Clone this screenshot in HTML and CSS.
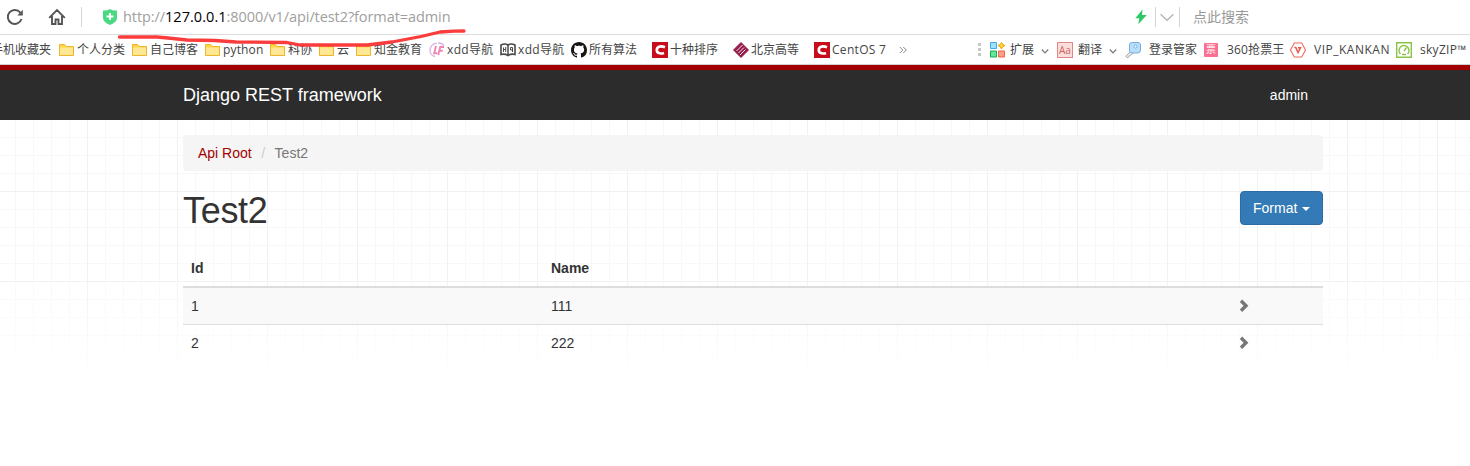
FILE: index.html
```html
<!DOCTYPE html>
<html lang="zh">
<head>
<meta charset="utf-8">
<title>Test2 – Django REST framework</title>
<link rel="stylesheet" href="styles.css">
</head>
<body>
<svg class="defs" width="0" height="0">
  <symbol id="folder" viewBox="0 0 16 16"><path d="M.5 2.500h5l2 2h7v9H.5z" fill="#ffd54a" stroke="#eeb52a"/><path d="M1 5.500h13v7.500H1z" fill="#ffe793"/></symbol>
  <symbol id="centos" viewBox="0 0 16 16"><path d="M0 0h16v16H0z" fill="#c70d1c"/><path d="M13 5.200C8 3.300 4.800 5 4.800 8s3.200 4.300 7.200 2.900" fill="none" stroke="#fff" stroke-width="2.700"/></symbol>
  <symbol id="down" viewBox="0 0 8 8"><path d="M.8 2.500 4 5.800 7.200 2.500" fill="none" stroke="#777" stroke-width="1.200"/></symbol>
  <symbol id="right" viewBox="0 0 10 14"><path d="M2 1.800 7 6.800l-5 5" fill="none" stroke="#777" stroke-width="3.400"/></symbol>
</svg>
<div class="address">
  <svg class="reload" width="18" height="18" viewBox="0 0 18 18"><path d="M15.500 11A7 7 0 1 1 14.300 4.600" fill="none" stroke="#555" stroke-width="1.900"/><path d="M16.800 1.800v5.700h-5.500z" fill="#555"/></svg>
  <svg class="home" width="18" height="18" viewBox="0 0 18 18"><path d="M1.200 9.800 9 2l7.800 7.800M4 8v8h3.500v-4.500h3V16H14V8" fill="none" stroke="#555" stroke-width="1.900"/></svg>
  <i class="rule rule-left"></i>
  <svg class="shield" width="14" height="16" viewBox="0 0 14 16"><path d="M0 1.500Q4 2 7 0q3 2 7 1.500V9q0 4-7 7-7-3-7-7z" fill="#4bd883"/><path d="M7 4v7M3.500 7.500h7" stroke="#fff" stroke-width="2"/></svg>
  <span class="url">http://<b>127.0.0.1</b>:8000/v1/api/test2?format=admin</span>
  <svg class="bolt" width="12" height="16" viewBox="0 0 12 16"><path d="M7.500.5.3 9.300h4L3.300 15.300 11.800 6H7z" fill="#2fc867"/></svg>
  <i class="rule"></i>
  <svg class="drop" width="14" height="9" viewBox="0 0 14 9"><path d="m.6 1.200 6.400 6 6.400-6" fill="none" stroke="#b5b5b5" stroke-width="1.400"/></svg>
  <i class="rule"></i>
  <span class="search">点此搜索</span>
</div>
<div class="bookmarks">
  <span class="mark w-first"><em>手机收藏夹</em></span>
  <span class="mark w73"><svg><use href="#folder"/></svg><em>个人分类</em></span>
  <span class="mark w73"><svg><use href="#folder"/></svg><em>自己博客</em></span>
  <span class="mark w65"><svg><use href="#folder"/></svg><em class="py">python</em></span>
  <span class="mark w49"><svg><use href="#folder"/></svg><em>科协</em></span>
  <span class="mark w37"><svg><use href="#folder"/></svg><em>云</em></span>
  <span class="mark w73"><svg><use href="#folder"/></svg><em>知金教育</em></span>
  <span class="mark w71"><svg viewBox="0 0 16 16"><path d="M8 1.500C3.500 1 .8 5 1 9c.3 3 2.500 5 5 5.500M9 1c3 0 5 1 6 3" fill="none" stroke="#d9b3df" stroke-width="1.300"/><path d="M7 4 5.200 11.300h3M9.200 13l2-8H15M10.300 8.700h3.500" fill="none" stroke="#ec86b5" stroke-width="1.900"/></svg><em class="xdd">xdd导航</em></span>
  <span class="mark w71"><svg viewBox="0 0 16 16"><path d="M1 3q4-2 7 0 3-2 7 0v9.500q-4-1-7 1-3-2-7-1z" fill="#fff" stroke="#4a4a4a" stroke-width="1.600"/><path d="M8 3v10" stroke="#4a4a4a" stroke-width="1.500"/><path d="M3.500 5.500v4.500M5.700 5v5M3.500 7.500h2M12.500 10V5.500h-2v2.500h2" fill="none" stroke="#4a4a4a"/></svg><em class="xdd">xdd导航</em></span>
  <span class="mark w81"><svg viewBox="0 0 16 16"><path fill="#171515" d="M8 0C3.580 0 0 3.580 0 8c0 3.540 2.290 6.530 5.470 7.590.4.070.55-.17.55-.38 0-.19-.01-.82-.01-1.490-2.010.37-2.530-.49-2.690-.94-.09-.23-.48-.94-.82-1.130-.28-.15-.68-.52-.01-.53.63-.01 1.080.58 1.230.82.72 1.210 1.870.87 2.330.66.07-.52.28-.87.51-1.070-1.780-.2-3.640-.89-3.640-3.950 0-.87.31-1.590.82-2.150-.08-.2-.36-1.020.08-2.120 0 0 .67-.21 2.200.82.64-.18 1.320-.27 2-.27s1.360.09 2 .27c1.530-1.040 2.200-.82 2.200-.82.44 1.100.16 1.920.08 2.120.51.56.82 1.270.82 2.150 0 3.070-1.870 3.750-3.650 3.950.29.25.54.73.54 1.480 0 1.070-.01 1.930-.01 2.200 0 .21.150.46.55.38A8.010 8.010 0 0 0 16 8c0-4.420-3.580-8-8-8"/></svg><em>所有算法</em></span>
  <span class="mark w81"><svg><use href="#centos"/></svg><em>十种排序</em></span>
  <span class="mark w81"><svg viewBox="0 0 16 16"><path d="M8 .5 15.500 8 8 15.500.5 8z" fill="#941b4a" stroke="#941b4a" stroke-linejoin="round"/><path d="M3.500 9 9.500 3M5.500 11l5.500-5.500M7 13l5.500-5.500" stroke="#fff" stroke-width=".9"/></svg><em>北京高等</em></span>
  <span class="mark w85"><svg><use href="#centos"/></svg><em class="cent">CentOS 7</em></span>
  <svg class="more" viewBox="0 0 8 8"><path d="m.8 1 3 3-3 3M4.300 1l3 3-3 3" fill="none" stroke="#888"/></svg>
  <svg class="dots" viewBox="0 0 3 14"><path d="M0 0h3v3H0zM0 5h3v3H0zM0 10h3v3H0z" fill="#c6c6c6"/></svg>
  <span class="mark ext"><svg viewBox="0 0 16 16"><path d="M.5.500h6v6h-6z" fill="#a0e0ff" stroke="#42a8e8"/><path d="M.5 9h6v6h-6z" fill="#67e69b" stroke="#16a953"/><path d="M8.500 9h6v6h-6z" fill="#ff9d88" stroke="#ed654b"/><path d="m11.500.5 1.200 2 2.300 1-2.300 1.200-1.200 2.300-1.200-2.300L8 3.500l2.300-1z" fill="#ffda35" stroke="#e8a100"/></svg><em>扩展</em><svg class="chev"><use href="#down"/></svg></span>
  <span class="mark trans"><i class="aa">Aa</i><em>翻译</em><svg class="chev"><use href="#down"/></svg></span>
  <span class="mark key"><svg viewBox="0 0 16 16"><path d="M6 9.500.8 14l1 1.500 2-.3.500-1.700 1.700-.5 2-2" fill="#eee" stroke="#aaa"/><path d="M6.500.500h6.500q2.500 0 2.500 2.500v5q0 3-3 3H7Q4.500 11 4.500 8.500V3Q4.500.500 6.500.500z" fill="#b9defa" stroke="#72ade0"/><circle cx="10.500" cy="4.500" r="1.500" fill="#fff" stroke="#72ade0"/></svg><em>登录管家</em></span>
  <span class="mark ticket"><i class="piao">票</i><em>360抢票王</em></span>
  <span class="mark vip"><svg viewBox="0 0 16 16"><path d="M4.300 1h7.400l3.800 7-3.800 7H4.300L.5 8z" fill="#fff" stroke="#ed6b60" stroke-width="1.100"/><path d="M4.300 5.500h1.500L8 10.500l2.500-4.700H8" fill="none" stroke="#e9574a" stroke-width="1.500"/></svg><em class="kan">VIP_KANKAN</em></span>
  <span class="mark sky"><svg viewBox="0 0 16 16"><path d="M.7.700h14.600v14.600H.7z" fill="#fff" stroke="#8bc34a" stroke-width="1.400"/><path d="M4.500 12A5 5 0 1 1 11.500 12M8 9l2.500-3.500M6 12.500h4" fill="none" stroke="#8bc34a" stroke-width="1.400"/></svg><em class="zip">skyZIP™</em></span>
</div>
<svg class="scribble" width="352" height="24" viewBox="0 0 352 24"><path d="M3.500 9 41 9 52 10 71 12 99 12.500 120 14 171 14.500 184 17 251 17 276 14 305 8.500 324 4 338 3.200 348 3" fill="none" stroke="#fa3c3c" stroke-width="3.300" stroke-linecap="round" stroke-linejoin="round"/></svg>
<nav class="navbar"><div class="container nav-row"><a class="brand">Django REST framework</a><a class="user">admin</a></div></nav>
<main class="page">
  <div class="container">
    <ul class="breadcrumb"><li><a>Api Root</a></li><li class="slash">/</li><li class="active">Test2</li></ul>
    <div class="heading"><h1>Test2</h1><button class="btn">Format <i class="caret"></i></button></div>
    <table class="table">
      <thead><tr><th class="c-id">Id</th><th class="c-name">Name</th><th></th></tr></thead>
      <tbody>
        <tr><td>1</td><td>111</td><td><svg class="go"><use href="#right"/></svg></td></tr>
        <tr><td>2</td><td>222</td><td><svg class="go"><use href="#right"/></svg></td></tr>
      </tbody>
    </table>
  </div>
</main>
</body>
</html>
```
FILE: styles.css
```css
* { box-sizing: border-box; }
body { margin: 0; height: 466px; overflow: hidden; background: #fff; font: 14px/20px "Liberation Sans", Arial, sans-serif; color: #333; position: relative; }
svg { display: block; flex: none; }
.defs { position: absolute; }
i, em { font-style: normal; }

.address { height: 35px; display: flex; align-items: center; border-bottom: 1px solid #dcdcdc; font-family: "Open Sans", "Noto Sans CJK SC", sans-serif; }
.reload { margin-left: 6px; }
.home { margin-left: 24px; }
.rule { width: 1px; height: 20px; background: #d6d6d6; flex: none; }
.rule-left { margin: 0 21px 0 15px; }
.url { width: 1018px; margin-left: 6px; font-size: 14.500px; letter-spacing: -.08px; color: #a0a0a0; white-space: nowrap; }
.url b { font-weight: 400; color: #000; letter-spacing: .05px; }
.bolt { margin-right: 8px; margin-left: -6px; }
.drop { margin: 0 5px 0 4px; }
.search { margin-left: 13px; font-size: 14px; color: #999; }

.bookmarks { height: 30px; display: flex; align-items: center; overflow: hidden; border-bottom: 1px solid #d2d2d2; font: 12px/18px "Open Sans", "Noto Sans CJK SC", sans-serif; color: #444; white-space: nowrap; }
.mark { display: flex; align-items: center; flex: none; }
.mark > svg { width: 16px; height: 16px; }
.mark em { margin-left: 2px; }
.w-first { width: 59px; }
.w-first em { margin-left: -9px; }
.w73 { width: 73px; }
.w65 { width: 65px; }
.w49 { width: 49px; }
.w37 { width: 37px; }
.w71 { width: 71px; }
.w81 { width: 81px; }
.w85 { width: 85px; }
.py { letter-spacing: .15px; }
.xdd { letter-spacing: .35px; }
.cent { letter-spacing: .3px; }
.kan { letter-spacing: .5px; }
.zip { letter-spacing: .3px; }
.more { width: 8px; height: 8px; }
.dots { width: 3px; height: 14px; margin: 0 9px 0 71px; }
.ext { width: 67px; }
.trans { width: 68px; }
.ext em, .trans em { margin-left: 4px; }
.trans em { margin-left: 5px; }
.mark > .chev { width: 8px; height: 8px; margin: 2px 0 0 7px; }
.aa { width: 16px; height: 16px; border: 1px solid #d88; background: #fbdedb; color: #c66; font-size: 10px; line-height: 14px; text-align: center; }
.key { width: 79px; }
.key em { margin-left: 8px; }
.ticket { width: 86px; }
.piao { width: 14px; height: 14px; border-radius: 1px; background: #fb6f91; color: #fff; font-size: 10px; line-height: 13px; text-align: center; }
.ticket em { margin-left: 9px; letter-spacing: .15px; }
.vip { width: 106px; }
.vip em, .sky em { margin-left: 8px; }

.scribble { position: absolute; left: 116px; top: 28px; }

.container { width: 1140px; margin-left: 183px; }
.navbar { height: 55px; border-top: 5px solid #a30000; background: #2c2c2c; }
.nav-row { height: 50px; display: flex; align-items: center; justify-content: space-between; color: #fff; }
.brand { font-size: 18px; }
.user { margin-right: 15px; }

.page { height: 251px; padding-top: 15px; background:
  linear-gradient(rgba(255,255,255,0) 150px, #fff 260px),
  linear-gradient(90deg, #f1f1f1 1px, transparent 1px) 87px 0 / 90px 90px,
  linear-gradient(#f1f1f1 1px, transparent 1px) 0 71px / 90px 90px,
  linear-gradient(90deg, #f8f8f8 1px, transparent 1px) 15px 0 / 18px 18px,
  linear-gradient(#f8f8f8 1px, transparent 1px) 0 17px / 18px 18px; }
.breadcrumb { display: flex; height: 36px; margin: 0; padding: 8px 15px; list-style: none; background: #f5f5f5; border-radius: 4px; }
.breadcrumb a { color: #a30000; }
.breadcrumb .slash { padding: 0 9.500px; color: #ccc; }
.breadcrumb .active { color: #777; }
.heading { display: flex; justify-content: space-between; padding-top: 20px; height: 79px; }
h1 { margin: 0; font-size: 36px; font-weight: 400; line-height: 40px; letter-spacing: -.3px; }
.btn { display: flex; align-items: center; width: 83px; height: 34px; padding: 0 12px; border: 1px solid #2e6da4; border-radius: 4px; background: #337ab7; color: #fff; font: inherit; }
.caret { margin: 1px 0 0 5px; border: 4px solid transparent; border-top-color: #fff; border-bottom: 0; }
.table { width: 1140px; table-layout: fixed; border-collapse: separate; border-spacing: 0; }
th, td { padding: 8px; text-align: left; }
th { height: 38px; border-bottom: 2px solid #ddd; }
td { height: 37px; line-height: 20px; }
tbody tr:first-child td { background: #f9f9f9; border-bottom: 1px solid #ddd; }
tbody tr:last-child td { height: 36px; padding: 7px 8px 8px; }
.c-id { width: 360px; }
.c-name { width: 688px; }
.go { width: 10px; height: 14px; }
```
